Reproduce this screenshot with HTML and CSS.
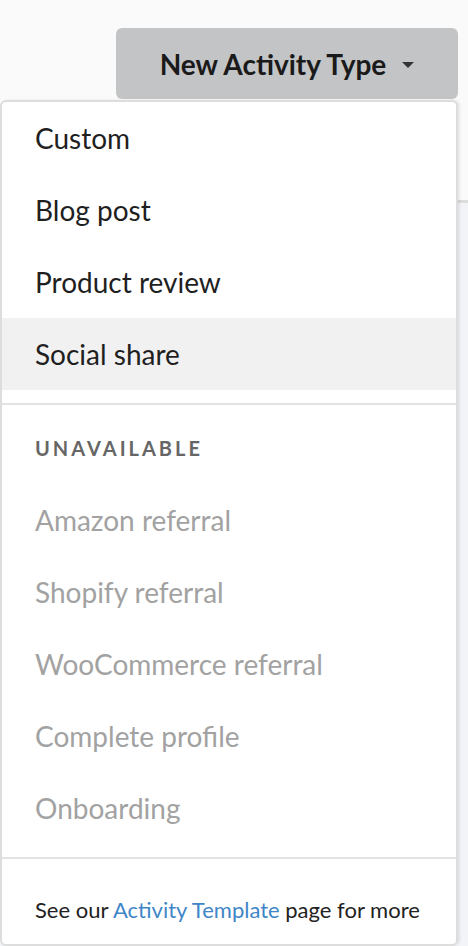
FILE: index.html
```html
<!DOCTYPE html>
<html>
<head>
<meta charset="utf-8">
<link rel="stylesheet" href="styles.css">
</head>
<body>
<div class="page">
  <div class="topbar">
    <button class="btn">
      <span class="btn-label">New Activity Type</span>
      <span class="caret"></span>
    </button>
  </div>
  <div class="content"></div>

  <div class="menu">
    <ul class="group">
      <li class="item">Custom</li>
      <li class="item">Blog post</li>
      <li class="item">Product review</li>
      <li class="item active">Social share</li>
    </ul>
    <div class="divider"></div>
    <div class="group-title">UNAVAILABLE</div>
    <ul class="group">
      <li class="item disabled">Amazon referral</li>
      <li class="item disabled">Shopify referral</li>
      <li class="item disabled">WooCommerce referral</li>
      <li class="item disabled">Complete profile</li>
      <li class="item disabled">Onboarding</li>
    </ul>
    <div class="divider"></div>
    <div class="footer">See our <a class="link" href="#">Activity Template</a> page for more</div>
  </div>
</div>
</body>
</html>
```

FILE: styles.css
```css
html, body {
  margin: 0;
  padding: 0;
}
body {
  width: 468px;
  height: 946px;
  overflow: hidden;
  background: #fafafa;
  font-family: Lato, "Open Sans", sans-serif;
  color: #1f1f1f;
}
.page {
  position: relative;
  height: 946px;
  display: flex;
  flex-direction: column;
}
.topbar {
  height: 203px;
  border-bottom: 3px solid #dcdcdc;
  display: flex;
  justify-content: flex-end;
  align-items: flex-start;
  padding: 28px 10px 0 0;
  box-sizing: border-box;
  flex: none;
}
.content {
  flex: 1;
  background: #f3f4f8;
}
.btn {
  width: 342px;
  height: 71px;
  border: 0;
  border-radius: 6px;
  background: #c3c4c6;
  display: flex;
  align-items: center;
  justify-content: center;
  gap: 16px;
  padding: 0;
  font-family: Lato, sans-serif;
  font-weight: 700;
  font-size: 28px;
  color: #1a1a1a;
}
.caret {
  width: 0;
  height: 0;
  border-left: 6.5px solid transparent;
  border-right: 6.5px solid transparent;
  border-top: 6px solid #333;
  margin-top: 2px;
}
.menu {
  position: absolute;
  top: 100px;
  left: 0;
  width: 458px;
  height: 846px;
  box-sizing: border-box;
  background: #fff;
  border: 2px solid #dddddd;
  border-radius: 6px;
  box-shadow: 2px 0 3px rgba(0, 0, 0, 0.08);
}
.group {
  list-style: none;
  margin: 0;
  padding: 0 0 13px 0;
}
.item {
  height: 72px;
  line-height: 72px;
  padding-left: 33px;
  font-size: 28px;
  color: #1f1f1f;
}
.item.active {
  background: #f1f1f1;
}
.item.disabled {
  color: #a2a2a2;
}
.divider {
  height: 2px;
  background: #e2e2e2;
}
.group-title {
  height: 79px;
  box-sizing: border-box;
  padding: 30px 0 0 33px;
  line-height: 26px;
  font-size: 20px;
  font-weight: 700;
  letter-spacing: 3px;
  color: #666;
}
.footer {
  padding: 37px 0 0 33px;
  line-height: 28px;
  font-size: 22px;
  color: #222;
}
.link {
  color: #3f86c8;
  text-decoration: none;
}
```
